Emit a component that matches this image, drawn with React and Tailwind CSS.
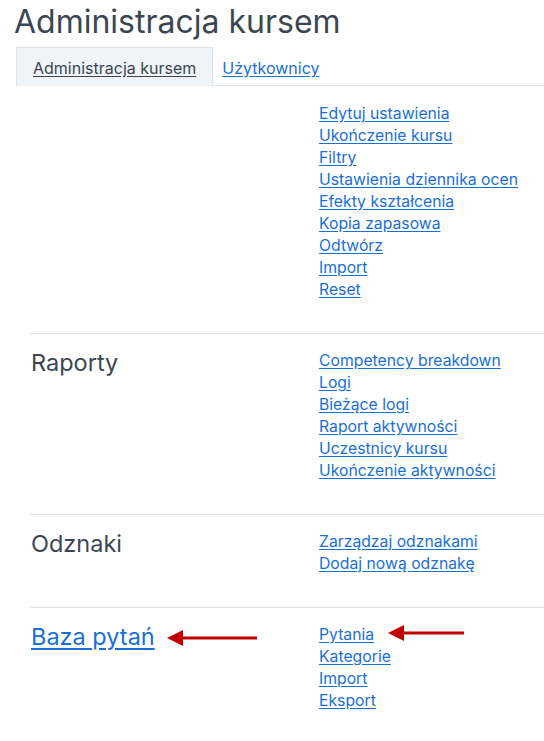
import React from 'react';

const sections=[
  {title:null, links:['Edytuj ustawienia','Ukończenie kursu','Filtry','Ustawienia dziennika ocen','Efekty kształcenia','Kopia zapasowa','Odtwórz','Import','Reset']},
  {title:'Raporty', links:['Competency breakdown','Logi','Bieżące logi','Raport aktywności','Uczestnicy kursu','Ukończenie aktywności']},
  {title:'Odznaki', links:['Zarządzaj odznakami','Dodaj nową odznakę']},
  {title:'Baza pytań', titleLink:true, links:['Pytania','Kategorie','Import','Eksport'], arrows:true},
];

const Arrow=({width, className})=>(
  <svg width={width} height="16" viewBox={`0 0 ${width} 16`} className={className}>
    <polygon points="0,8 16,0 16,16" fill="#c00000"/>
    <rect x="14" y="6.5" width={width-14} height="3" fill="#c00000"/>
  </svg>
);

const Section=({s, first})=>(
  <div className={`relative flex ${first?'pt-[17px]':'pt-4 border-t border-[#dee2e6]'} pb-8`}>
    <div className="w-[289px] pl-px shrink-0">
      {s.title&&(s.titleLink?(
        <a href="#" className="block text-[23.5px] leading-[26px] text-[#1a6fd4] underline underline-offset-[3px] w-fit">{s.title}</a>
      ):(
        <h3 className="text-[23.5px] leading-[26px] text-[#3a4752]">{s.title}</h3>
      ))}
    </div>
    <ul className="flex flex-col text-[15.75px] leading-[22px]">
      {s.links.map((l, i)=>(
        <li key={i} className="h-[22px]">
          <a href="#" className="text-[#1a6fd4] underline underline-offset-2">{l}</a>
        </li>
      ))}
    </ul>
    {s.arrows&&(
      <>
        <Arrow width={90} className="absolute left-[137px] top-[22px]"/>
        <Arrow width={76} className="absolute left-[358px] top-[17px]"/>
      </>
    )}
  </div>
);

export default function App() {
  return (
    <div className="bg-white min-h-[741px] overflow-hidden" style={{fontFamily:'Inter, "Noto Sans", sans-serif'}}>
      <h1 className="pl-[14px] pt-[4px] mb-[7px] text-[32px] leading-[36px] text-[#3a4752]">Administracja kursem</h1>
      <ul className="ml-4 flex border-b border-[#dee2e6] text-[16px] leading-[22px]">
        <li className="border border-b-0 border-[#dee2e6] bg-[#eef4f7] px-4 pt-[9px] -mb-px h-[39px]">
          <a href="#" className="block text-[#3a4752] underline underline-offset-2">Administracja kursem</a>
        </li>
        <li className="px-2 pt-[9px] border border-transparent">
          <a href="#" className="block text-[#1a6fd4] underline underline-offset-2">Użytkownicy</a>
        </li>
      </ul>
      <div className="ml-[30px]">
        {sections.map((s, i)=><Section key={i} s={s} first={i===0}/>)}
      </div>
    </div>
  );
}
